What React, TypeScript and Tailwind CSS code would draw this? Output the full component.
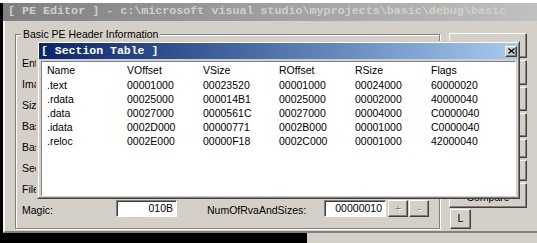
const raised =
  "border border-t-white border-l-white border-r-[#404040] border-b-[#404040] shadow-[inset_-1px_-1px_0_#808080]";
const sunken =
  "border border-t-[#808080] border-l-[#808080] border-r-white border-b-white shadow-[inset_1px_1px_0_#404040]";

const rows = [
  [".text", "00001000", "00023520", "00001000", "00024000", "60000020"],
  [".rdata", "00025000", "000014B1", "00025000", "00002000", "40000040"],
  [".data", "00027000", "0000561C", "00027000", "00004000", "C0000040"],
  [".idata", "0002D000", "00000771", "0002B000", "00001000", "C0000040"],
  [".reloc", "0002E000", "00000F18", "0002C000", "00001000", "42000040"],
];

const labels = ["Ent", "Ima", "Size", "Bas", "Bas", "Sec", "File"];

const btnHeights = ["h-[25px]", "h-[25px]", "h-[24px]", "h-[24px]", "h-[19px]", "h-[21px]"];

export default function App() {
  return (
    <div className="relative w-[537px] h-[243px] overflow-hidden bg-black font-['Liberation_Sans',Arial,sans-serif] text-[10.5px] text-black">
      <div className="h-[3px] bg-white" />
      <div className="flex h-[230px]">
        <div className="w-[3px] bg-black" />
        <div className="flex-1 flex flex-col">
          <div className="h-[18px] bg-gradient-to-r from-[#808080] to-[#c0c0c0] flex items-center pl-[5px] overflow-hidden whitespace-nowrap font-['Liberation_Mono',monospace] font-bold text-[11.7px] text-[#d4d0c8]">
            [ PE Editor ] - c:\microsoft visual studio\myprojects\basic\debug\basic
          </div>
          <div className="flex-1 bg-[#d4d0c8] border-l-2 border-l-[#f4f4f4] border-b-2 border-b-[#808080] flex pt-[13px] pl-[10px]">
            {/* group box */}
            <div className="relative w-[425px] h-[195px] border border-[#808080] shadow-[inset_1px_1px_0_white,1px_1px_0_white]">
              <div className="absolute -top-[7px] left-[5px] px-[2px] bg-[#d4d0c8] leading-[13px] whitespace-nowrap">
                Basic PE Header Information
              </div>
              <div className="flex flex-col pt-[18px] pl-[6px]">
                {labels.map((l, i) => (
                  <div key={i} className="h-[21px] w-[14px] flex items-center whitespace-nowrap overflow-hidden">
                    {l}
                  </div>
                ))}
                <div className="h-[21px] flex items-center whitespace-nowrap">
                  <div className="w-[94px]">Magic:</div>
                  <div className={`self-start w-[61px] h-[17px] bg-white ${sunken} flex items-center justify-end pr-[3px]`}>010B</div>
                  <div className="ml-[30px] w-[117px]">NumOfRvaAndSizes:</div>
                  <div className={`self-start w-[62px] h-[17px] bg-white ${sunken} flex items-center justify-end pr-[3px]`}>00000010</div>
                  <div className={`self-start ml-[2px] w-[20px] h-[17px] ${raised} flex items-center justify-center text-[#808080] [text-shadow:1px_1px_0_white]`}>+</div>
                  <div className={`self-start ml-[1px] w-[20px] h-[17px] ${raised} flex items-center justify-center text-[#808080] [text-shadow:1px_1px_0_white]`}>-</div>
                </div>
              </div>
            </div>
            {/* right buttons */}
            <div className="ml-[9px] -mt-[1px] w-[78px] flex flex-col">
              <div className="flex flex-col gap-[2px]">
                {btnHeights.map((h, i) => (
                  <div key={i} className={`${h} ${raised}`} />
                ))}
                <div className={`h-[25px] ${raised} flex items-center justify-center pt-[4px]`}>Compare</div>
              </div>
              <div className={`mt-[1px] ml-[1px] w-[21px] h-[20px] ${raised} flex items-center justify-center`}>L</div>
            </div>
          </div>
        </div>
      </div>
      <div className="flex h-[10px]">
        <div className="w-[307px] bg-black" />
        <div className="flex-1 bg-[#d4d0c8]" />
      </div>

      {/* Section Table dialog */}
      <div className="absolute left-[37px] top-[41px] w-[483px] bg-[#d4d0c8] border border-t-[#d4d0c8] border-l-[#d4d0c8] border-r-[#404040] border-b-[#404040]">
        <div className="border border-t-white border-l-white border-r-[#808080] border-b-[#808080] flex flex-col">
          <div className="h-[16px] bg-gradient-to-r from-[#0a246a] to-[#a6caf0] flex items-center justify-between">
            <span className="pl-[2px] font-['Liberation_Mono',monospace] font-bold text-[11.5px] text-white whitespace-nowrap">
              [ Section Table ]
            </span>
            <div className={`mr-[1px] w-[12px] h-[11px] bg-[#d4d0c8] ${raised} flex items-center justify-center`}>
              <svg width="7" height="6" viewBox="0 0 7 6">
                <path d="M0.5 0.5 L6.5 5.5 M6.5 0.5 L0.5 5.5" stroke="black" strokeWidth="1.3" />
              </svg>
            </div>
          </div>
          <div className="mx-[2px] mt-[2px] mb-[1px] h-[135px] bg-white border border-t-[#808080] border-l-[#808080] border-r-white border-b-white">
            <div className="h-[17px] flex items-center pl-[5px]">
              {["Name", "VOffset", "VSize", "ROffset", "RSize", "Flags"].map((h, i) => (
                <div key={h} className={i === 0 ? "w-[80px]" : "w-[76px]"}>
                  {h}
                </div>
              ))}
            </div>
            {rows.map((r) => (
              <div key={r[0]} className="h-[14px] flex items-center pl-[5px]">
                {r.map((c, i) => (
                  <div key={i} className={i === 0 ? "w-[80px]" : "w-[76px]"}>
                    {c}
                  </div>
                ))}
              </div>
            ))}
          </div>
        </div>
      </div>
    </div>
  );
}
